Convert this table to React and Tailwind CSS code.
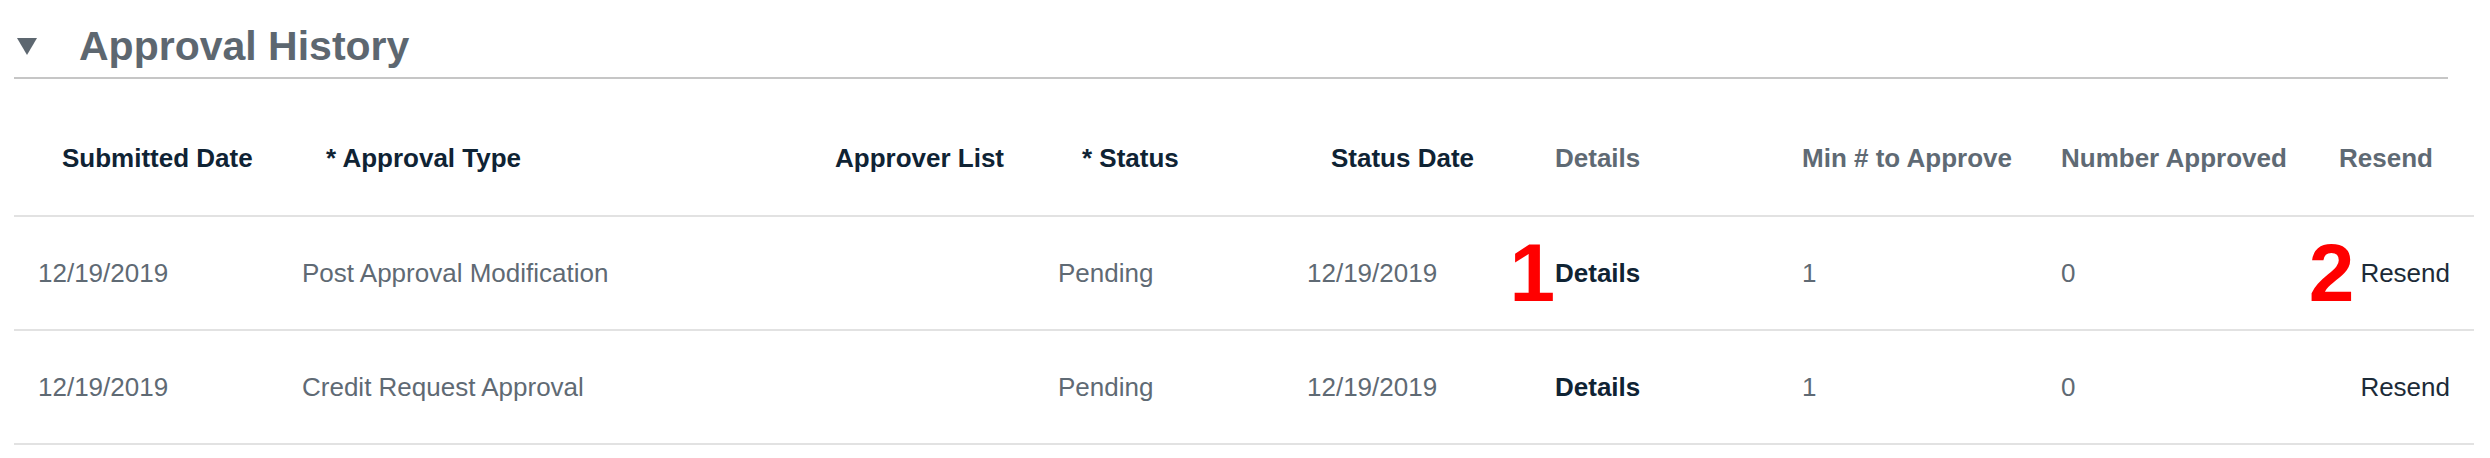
const columns = [
  { label: "Submitted Date", dark: true },
  { label: "* Approval Type", dark: true },
  { label: "Approver List", dark: true },
  { label: "* Status", dark: true },
  { label: "Status Date", dark: true },
  { label: "Details", dark: false, tight: true },
  { label: "Min # to Approve", dark: false, tight: true },
  { label: "Number Approved", dark: false, tight: true },
  { label: "Resend", dark: false },
];

const rows = [
  {
    submitted: "12/19/2019",
    type: "Post Approval Modification",
    status: "Pending",
    statusDate: "12/19/2019",
    min: "1",
    approved: "0",
    marks: true,
  },
  {
    submitted: "12/19/2019",
    type: "Credit Request Approval",
    status: "Pending",
    statusDate: "12/19/2019",
    min: "1",
    approved: "0",
    marks: false,
  },
];

const gridCols =
  "grid grid-cols-[264px_509px_247px_249px_248px_247px_259px_254px_183px]";

function Marker({ n, gap }) {
  return (
    <span
      className={`absolute right-full top-1/2 -translate-y-1/2 text-[82px] font-bold leading-none text-[#ff0000] ${gap}`}
    >
      {n}
    </span>
  );
}

export default function App() {
  return (
    <div className="w-[2490px] h-[458px] bg-white font-['Liberation_Sans',Arial,sans-serif] overflow-hidden">
      {/* section title */}
      <div className="ml-[14px] w-[2434px] pt-[21px] pb-[6px] border-b-2 border-[#c6c6c6] flex items-center">
        <svg width="20" height="17" viewBox="0 0 20 17" className="ml-[3px] shrink-0">
          <polygon points="0,0 20,0 10,17" fill="#5d6770" />
        </svg>
        <h2 className="ml-[42px] h-[50px] leading-[50px] text-[41px] font-bold text-[#5d6770]">
          Approval History
        </h2>
      </div>

      {/* table */}
      <div className="ml-[14px] mt-[22px] w-[2460px] text-[26px]">
        <div className={`${gridCols} h-[116px] border-b-2 border-[#e2e2e2] items-center font-bold`}>
          {columns.map((c) => (
            <div
              key={c.label}
              className={`${c.tight ? "pl-[24px]" : "pl-[48px]"} ${
                c.dark ? "text-[#0f2334]" : "text-[#5f6a74]"
              } whitespace-nowrap`}
            >
              {c.label}
            </div>
          ))}
        </div>

        {rows.map((r, i) => (
          <div
            key={i}
            className={`${gridCols} h-[114px] border-b-2 border-[#e2e2e2] items-center text-[#5f6a74] whitespace-nowrap`}
          >
            <div className="pl-[24px]">{r.submitted}</div>
            <div className="pl-[24px]">{r.type}</div>
            <div className="pl-[24px]"></div>
            <div className="pl-[24px]">{r.status}</div>
            <div className="pl-[24px]">{r.statusDate}</div>
            <div className="pl-[24px]">
              <span className="relative font-bold text-[#0f2334]">
                {r.marks && <Marker n="1" gap="mr-0" />}
                Details
              </span>
            </div>
            <div className="pl-[24px]">{r.min}</div>
            <div className="pl-[24px]">{r.approved}</div>
            <div className="pr-[24px] text-right">
              <span className="relative text-[#1c2b38]">
                {r.marks && <Marker n="2" gap="mr-[6px]" />}
                Resend
              </span>
            </div>
          </div>
        ))}
      </div>
    </div>
  );
}
